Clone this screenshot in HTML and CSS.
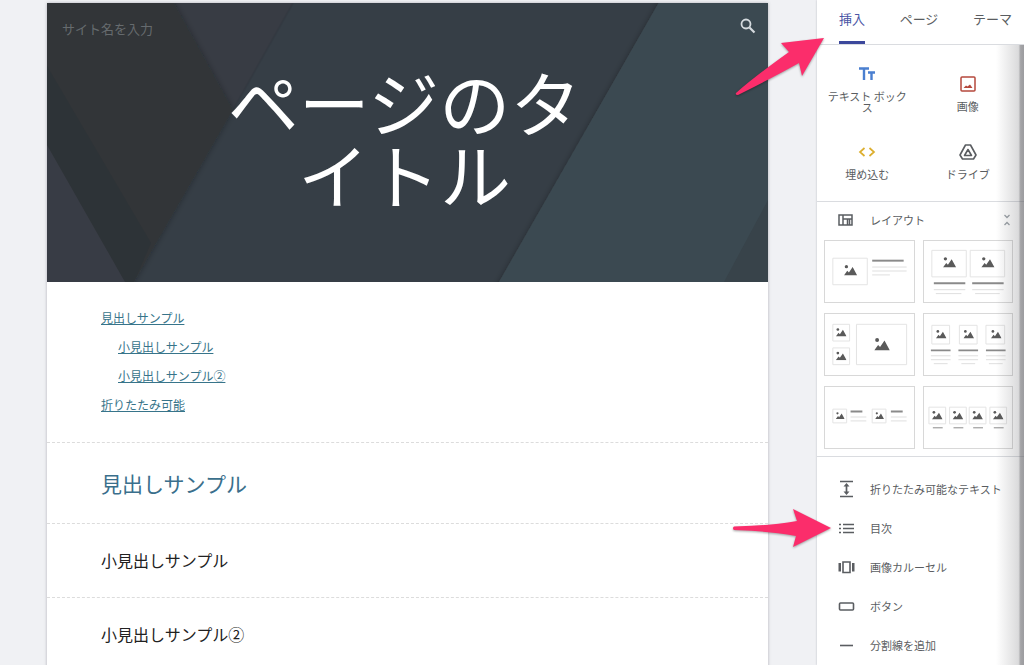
FILE: index.html
```
<!DOCTYPE html>
<html lang="ja">
<head>
    <meta charset="UTF-8">
    <meta name="viewport" content="width=device-width, initial-scale=1.0">
    <title>サイト エディタ</title>
    <link rel="stylesheet" href="styles.css">
</head>
<body>
    <!-- shared thumbnail picture -->
    <svg class="defs" width="0" height="0" aria-hidden="true">
        <symbol id="pic" viewBox="0 0 16 13">
            <circle cx="3" cy="2.5" r="2"/>
            <path d="M0 13 4 7.500 6 9.500 10.500 3 16 13z"/>
        </symbol>
    </svg>

    <div class="app">
        <main class="canvas">
            <article class="page">
                <header class="hero">
                    <svg class="hero-bg" viewBox="0 0 721 279" preserveAspectRatio="none" aria-hidden="true">
                        <defs>
                            <filter id="soft" x="-10%" y="-10%" width="120%" height="120%">
                                <feDropShadow dx="0" dy="0" stdDeviation="3" flood-color="#14181c" flood-opacity=".3"/>
                            </filter>
                        </defs>
                        <rect width="721" height="279" fill="#363e46"/>
                        <path d="M127 0H246L186 107z" fill="#383c44"/>
                        <path d="M246 0 186 107" stroke="#30363e" stroke-width="2" opacity=".4"/>
                        <path d="M-20-20H116L186 107 87 279 80 300H-20z" fill="#303639" filter="url(#soft)"/>
                        <path d="M0 63 104 240 87 279H78L0 142z" fill="#2d3337"/>
                        <path d="M0 142 78 279H0z" fill="#383c45"/>
                        <path d="M623-20H760V300H440L452 279z" fill="#3b4951" filter="url(#soft)"/>
                        <path d="M721 197 677 279H721z" fill="#38434a"/>
                    </svg>
                    <div class="hero-bar">
                        <input class="site-name" type="text" placeholder="サイト名を入力" aria-label="サイト名">
                        <button class="search-btn" type="button" aria-label="検索">
                            <svg viewBox="0 0 16 16" width="16" height="16"><circle cx="6" cy="6" r="4.500" fill="none" stroke="currentColor" stroke-width="1.800"/><path d="M9.500 9.500 14.500 14.500" stroke="currentColor" stroke-width="2.200"/></svg>
                        </button>
                    </div>
                    <h1 class="hero-title">ページのタ<br>イトル</h1>
                </header>

                <nav class="section toc" aria-label="目次">
                    <ul>
                        <li><a href="#h1">見出しサンプル</a></li>
                        <li class="sub"><a href="#h2">小見出しサンプル</a></li>
                        <li class="sub"><a href="#h3">小見出しサンプル②</a></li>
                        <li><a href="#h4">折りたたみ可能</a></li>
                    </ul>
                </nav>
                <section class="section"><h2 id="h1">見出しサンプル</h2></section>
                <section class="section"><h3 id="h2">小見出しサンプル</h3></section>
                <section class="section"><h3 id="h3">小見出しサンプル②</h3></section>
            </article>
        </main>

        <aside class="panel">
            <div class="tabs" role="tablist">
                <button class="tab active" type="button" role="tab" aria-selected="true">挿入</button>
                <button class="tab" type="button" role="tab" aria-selected="false">ページ</button>
                <button class="tab" type="button" role="tab" aria-selected="false">テーマ</button>
            </div>

            <div class="insert-grid">
                <button class="insert" type="button">
                    <svg class="blue" viewBox="0 0 18 16" width="18" height="16"><path d="M1 2.500H11M6 2.500V14M10 6.500H17M13.500 6.500V14" fill="none" stroke="currentColor" stroke-width="2.400"/></svg>
                    <span>テキスト ボックス</span>
                </button>
                <button class="insert insert-image" type="button">
                    <svg class="red" viewBox="0 0 16 16" width="16" height="16"><rect x="1" y="1" width="14" height="14" rx="1" fill="none" stroke="currentColor" stroke-width="1.500"/><path d="M3.500 12 6 9.500l1.500 1L10 8.500l2.500 3.500z" fill="currentColor"/></svg>
                    <span>画像</span>
                </button>
                <button class="insert" type="button">
                    <svg class="yellow" viewBox="0 0 18 16" width="18" height="16"><path d="M6.500 4 2 8l4.500 4M11.500 4 16 8l-4.500 4" fill="none" stroke="currentColor" stroke-width="1.700"/></svg>
                    <span>埋め込む</span>
                </button>
                <button class="insert" type="button">
                    <svg viewBox="0 0 18 16" width="18" height="16"><path d="M6.500 1H11.500L17 11 14.500 15H3.500L1 11zM9 5.500 5.500 11.500H12.500z" fill="none" stroke="currentColor" stroke-width="1.600" stroke-linejoin="round"/></svg>
                    <span>ドライブ</span>
                </button>
            </div>

            <section class="layouts">
                <button class="layouts-head" type="button" aria-expanded="true">
                    <svg viewBox="0 0 16 12" width="16" height="12"><path d="M1 1H14V11H1zM5 1V11M5 5H14M9.500 5V11M11.500 5V11" fill="none" stroke="currentColor" stroke-width="1.500"/></svg>
                    <span>レイアウト</span>
                    <svg class="collapse" viewBox="0 0 8 12" width="8" height="12"><path d="M1.500 1 4 3.500 6.500 1M1.500 11 4 8.500 6.500 11" fill="none" stroke="currentColor" stroke-width="1.300"/></svg>
                </button>
                <div class="layout-grid">
                    <button class="layout" type="button" aria-label="レイアウト 1">
                        <svg viewBox="0 0 90 62">
                            <path class="frame" d="M8 17.500H43V44.500H8z"/>
                            <use href="#pic" x="19" y="24" width="14" height="11"/>
                            <path class="bold" d="M48 20H80"/>
                            <path class="thin" d="M48 26.500H83M48 30.500H83M48 34.500H66"/>
                        </svg>
                    </button>
                    <button class="layout" type="button" aria-label="レイアウト 2">
                        <svg viewBox="0 0 90 62">
                            <path class="frame" d="M8 9.500H43V36.500H8zM47 9.500H82V36.500H47z"/>
                            <use href="#pic" x="19" y="16" width="14" height="11"/>
                            <use href="#pic" x="58" y="16" width="14" height="11"/>
                            <path class="bold" d="M10 43H42M49 43H81"/>
                            <path class="thin" d="M10 49.500H42M49 49.500H81M12 53.500H38M52 53.500H77"/>
                        </svg>
                    </button>
                    <button class="layout" type="button" aria-label="レイアウト 3">
                        <svg viewBox="0 0 90 62">
                            <path class="frame" d="M8 10.500H25V27.500H8zM8 34.500H25V51.500H8zM32 10.500H83V51.500H32z"/>
                            <use href="#pic" x="11" y="14" width="11" height="9"/>
                            <use href="#pic" x="11" y="38" width="11" height="9"/>
                            <use href="#pic" x="50" y="24" width="16" height="13"/>
                        </svg>
                    </button>
                    <button class="layout" type="button" aria-label="レイアウト 4">
                        <svg viewBox="0 0 90 62">
                            <path class="frame" d="M8 11.500H26V30.500H8zM36 11.500H54V30.500H36zM63 11.500H82V30.500H63z"/>
                            <use href="#pic" x="12" y="16" width="11" height="9"/>
                            <use href="#pic" x="40" y="16" width="11" height="9"/>
                            <use href="#pic" x="68" y="16" width="11" height="9"/>
                            <path class="bold" d="M7 37H27M35 37H55M63 37H83"/>
                            <path class="thin" d="M7 42.500H27M35 42.500H55M63 42.500H83M7 46.500H27M35 46.500H55M63 46.500H83M10 50.500H24M38 50.500H52M66 50.500H80"/>
                        </svg>
                    </button>
                    <button class="layout" type="button" aria-label="レイアウト 5">
                        <svg viewBox="0 0 90 62">
                            <path class="frame" d="M8 22.500H22V36.500H8zM48 22.500H62V36.500H48z"/>
                            <use href="#pic" x="11" y="25" width="9" height="8"/>
                            <use href="#pic" x="51" y="25" width="9" height="8"/>
                            <path class="bold" d="M26 25H38M67 25H79"/>
                            <path class="thin" d="M26 30.500H42M26 34.500H42M67 30.500H83M67 34.500H83"/>
                        </svg>
                    </button>
                    <button class="layout" type="button" aria-label="レイアウト 6">
                        <svg viewBox="0 0 90 62">
                            <path class="frame" d="M5 20.500H22V37.500H5zM26 20.500H43V37.500H26zM46 20.500H63V37.500H46zM67 20.500H84V37.500H67z"/>
                            <use href="#pic" x="8" y="24" width="11" height="9"/>
                            <use href="#pic" x="29" y="24" width="11" height="9"/>
                            <use href="#pic" x="49" y="24" width="11" height="9"/>
                            <use href="#pic" x="70" y="24" width="11" height="9"/>
                            <path class="thin dark" d="M9 41.500H19M30 41.500H40M50 41.500H60M71 41.500H81"/>
                        </svg>
                    </button>
                </div>
            </section>

            <ul class="components">
                <li><button type="button">
                    <svg viewBox="0 0 18 18" width="18" height="18"><path d="M2 1.500H15M2 16.500H15M8.500 5V13" fill="none" stroke="currentColor" stroke-width="1.700"/><path d="M8.500 3 11.500 6.500H5.500zM8.500 15 5.500 11.500H11.500z" fill="currentColor"/></svg>
                    <span>折りたたみ可能なテキスト</span>
                </button></li>
                <li><button type="button">
                    <svg viewBox="0 0 18 18" width="18" height="18"><path d="M1 5.500H3M1 9.500H3M1 13.500H3M5 5.500H16M5 9.500H16M5 13.500H16" fill="none" stroke="currentColor" stroke-width="1.700"/></svg>
                    <span>目次</span>
                </button></li>
                <li><button type="button">
                    <svg viewBox="0 0 18 18" width="18" height="18"><path d="M5 4H12V14.500H5z" fill="none" stroke="currentColor" stroke-width="1.600"/><path d="M.5 5h2.500v8.500H.5zM14 5h2.500v8.500H14z" fill="currentColor"/></svg>
                    <span>画像カルーセル</span>
                </button></li>
                <li><button type="button">
                    <svg viewBox="0 0 18 18" width="18" height="18"><rect x="1.500" y="6" width="14" height="7" rx="1" fill="none" stroke="currentColor" stroke-width="1.600"/></svg>
                    <span>ボタン</span>
                </button></li>
                <li><button type="button">
                    <svg viewBox="0 0 18 18" width="18" height="18"><path d="M2 9.500H15" stroke="currentColor" stroke-width="1.600"/></svg>
                    <span>分割線を追加</span>
                </button></li>
            </ul>
            <div class="edge-shade"></div>

            <!-- callout arrows, anchored to the panel -->
            <svg class="arrow arrow-tab" viewBox="0 0 96 64" width="96" height="64" aria-hidden="true">
                <path d="M4 60Q22 44 57 19L49 10 92 5 70 43 67 30Q40 45 6 62 3 62 4 60z"/>
            </svg>
            <svg class="arrow arrow-toc" viewBox="0 0 104 48" width="104" height="48" aria-hidden="true">
                <path d="M4 22.500Q40 22 67 17L63 5 101 24 63 43 66 32Q40 27 4 26 2 24 4 22.500z"/>
            </svg>
        </aside>
    </div>
</body>
</html>
```

FILE: styles.css
```
* {
    box-sizing: border-box;
}
body {
    margin: 0;
    font-family: "Noto Sans CJK JP", sans-serif;
    background-color: #f0f1f4;
    color: #212121;
}
button {
    margin: 0;
    padding: 0;
    border: none;
    background: none;
    color: inherit;
    font: inherit;
    cursor: pointer;
}
svg {
    display: block;
    flex-shrink: 0;
}
ul {
    margin: 0;
    padding: 0;
    list-style: none;
}
.defs {
    position: absolute;
}
.app {
    display: flex;
    height: 100vh;
    overflow: hidden;
}

/* page being edited */
.canvas {
    flex: 1;
    min-width: 0;
    padding: 3px 49px 0 47px;
}
.page {
    min-height: 100%;
    background: #fff;
    box-shadow: 0 0 3px rgba(60, 64, 80, 0.35);
}
.hero {
    position: relative;
    padding: 11px 12px 74px;
    color: #fff;
}
.hero-bg {
    position: absolute;
    inset: 0;
    width: 100%;
    height: 100%;
}
.hero-bar {
    position: relative;
    display: flex;
    justify-content: space-between;
    padding-left: 3px;
}
.site-name {
    width: 200px;
    height: 28px;
    padding: 0;
    border: none;
    outline: none;
    background: none;
    color: #fff;
    font: 13px "Noto Sans CJK JP", sans-serif;
}
.site-name::placeholder {
    color: #666b6e;
    opacity: 1;
}
.search-btn {
    align-self: flex-start;
    padding-top: 4px;
    color: #d5dade;
}
.hero-title {
    position: relative;
    margin: 22px 0 0;
    padding-right: 6px;
    font-size: 71px;
    font-weight: 400;
    line-height: 72px;
    text-align: center;
}
.section {
    padding: 24px 54px;
    border-bottom: 1px dashed #dcdcdc;
}
.toc {
    padding-top: 21px;
    padding-bottom: 23px;
    font-size: 12px;
    line-height: 29px;
}
.toc .sub {
    padding-left: 17px;
}
.toc a {
    color: #37748a;
    text-underline-offset: 1px;
}
.section h2,
.section h3 {
    margin: 0;
    font-weight: 400;
}
.section h2 {
    color: #3a6f8c;
    font-size: 21px;
    line-height: 32px;
}
.section h3 {
    font-size: 16px;
    line-height: 25px;
}

/* side panel */
.panel {
    position: relative;
    flex: 0 0 207px;
    background: #fff;
    box-shadow: 0 0 2px rgba(60, 64, 80, 0.3);
    color: #5a5d61;
    font-size: 11px;
}
.tabs {
    display: flex;
    justify-content: space-between;
    height: 45px;
    padding: 0 12px 0 22px;
    border-bottom: 1px solid #dadce0;
    font-size: 13px;
}
.tab {
    padding-bottom: 5px;
    border-bottom: 3px solid transparent;
}
.tab.active {
    border-color: #3c489c;
    color: #4a55a5;
}
.insert-grid {
    display: grid;
    grid-template-columns: 1fr 1fr;
    grid-template-rows: 88px 68px;
    padding-right: 6px;
    border-bottom: 1px solid #dadce0;
}
.insert {
    display: flex;
    flex-direction: column;
    align-items: center;
    justify-content: center;
    gap: 9px;
    padding: 0 7px;
    line-height: 11px;
}
.insert-image {
    padding-top: 10px;
}
.insert:nth-child(n + 3) {
    justify-content: flex-start;
    padding-top: 11px;
}
.blue {
    color: #4a7fd0;
}
.red {
    color: #b5483c;
}
.yellow {
    color: #dcae2e;
}
.layouts {
    padding: 0 11px 7px 7px;
    border-bottom: 1px solid #dadce0;
}
.layouts-head {
    display: flex;
    align-items: center;
    gap: 16px;
    width: 100%;
    height: 38px;
    padding: 0 2px 2px 14px;
}
.collapse {
    margin-left: auto;
    color: #9aa0a6;
}
.layout-grid {
    display: grid;
    grid-template-columns: 1fr 1fr;
    gap: 10px 8px;
}
.layout {
    border: 1px solid #d8d8d8;
}
.layout svg {
    width: 100%;
    fill: #5a5a5a;
}
.layout .frame {
    fill: none;
    stroke: #e3e3e3;
}
.layout .bold {
    stroke: #8a8a8a;
    stroke-width: 2;
}
.layout .thin {
    stroke: #dedede;
}
.layout .dark {
    stroke: #8a8a8a;
}
.components {
    padding-top: 13px;
}
.components button {
    display: flex;
    align-items: center;
    gap: 14px;
    width: 100%;
    height: 39px;
    padding-left: 21px;
    white-space: nowrap;
}
.edge-shade {
    position: absolute;
    top: 45px;
    right: 0;
    bottom: 0;
    width: 28px;
    background: linear-gradient(to right, rgba(90, 90, 95, 0), rgba(90, 90, 95, 0.22) 80%, rgba(90, 90, 95, 0.55) 88%, rgba(90, 90, 95, 0.6));
    pointer-events: none;
}
.arrow {
    position: absolute;
    fill: #fb2d6b;
    filter: drop-shadow(0 1px 1px rgba(0, 0, 0, 0.35));
    pointer-events: none;
}
.arrow-tab {
    top: 33px;
    left: -85px;
}
.arrow-toc {
    top: 504px;
    left: -87px;
}
```
